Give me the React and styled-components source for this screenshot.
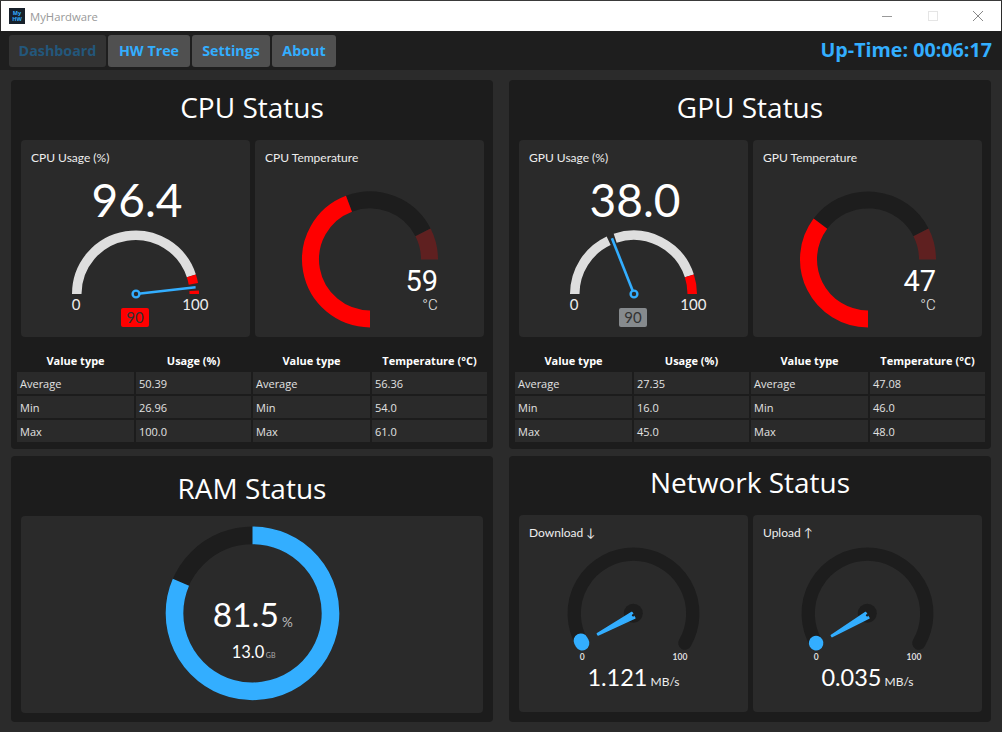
import { Fragment } from "react";
import styled, { createGlobalStyle } from "styled-components";

const ACCENT = "#33aeff";
const TRACK = "#1d1d1d";
const ARC = "#dedede";
const RED = "#ff0000";

const GlobalStyle = createGlobalStyle`
  html, body {
    margin: 0;
    padding: 0;
    background: #2b2b2b;
  }
  body {
    font-family: "Open Sans", "Liberation Sans", sans-serif;
  }
`;

const Window = styled.div`
  width: 1002px;
  height: 732px;
  overflow: hidden;
  display: flex;
  flex-direction: column;
  background: #2b2b2b;
  box-sizing: border-box;
  border-top: 1px solid #3a3a3a;
`;

const TitleBar = styled.div`
  height: 30px;
  flex: none;
  display: flex;
  align-items: center;
  background: #fff;
  padding-left: 8px;
  margin-left: 1px;
  margin-right: 1px;
  box-sizing: border-box;
`;

const AppIcon = styled.div`
  width: 16px;
  height: 16px;
  background: #17202a;
  color: ${ACCENT};
  font-size: 5.5px;
  font-weight: 700;
  line-height: 6px;
  text-align: center;
  padding-top: 2px;
  box-sizing: border-box;
`;

const AppName = styled.span`
  margin-left: 5px;
  font-size: 11.3px;
  color: #999;
`;

const WindowControls = styled.div`
  margin-left: auto;
  display: flex;
  align-items: center;
  gap: 35.5px;
  padding-right: 18px;
`;

const NavBar = styled.div`
  height: 39px;
  flex: none;
  display: flex;
  align-items: center;
  background: #1e1e1e;
  padding: 0 10px 0 9px;
  gap: 2px;
`;

const NavButton = styled.button`
  height: 32px;
  width: ${({ $w }) => $w}px;
  padding: 0;
  border: none;
  border-radius: 3px;
  background: ${({ $disabled }) => ($disabled ? "#333" : "#505050")};
  color: ${({ $disabled }) => ($disabled ? "#23577b" : ACCENT)};
  font-family: "Open Sans", sans-serif;
  font-weight: 700;
  font-size: 14.3px;
`;

const UpTime = styled.div`
  margin-left: auto;
  margin-top: -2px;
  color: ${ACCENT};
  font-size: 19.7px;
  font-weight: 700;
`;

const Dashboard = styled.div`
  display: grid;
  grid-template-columns: 482px 482px;
  grid-template-rows: 369px 266px;
  column-gap: 16px;
  row-gap: 7px;
  padding: 10px 11px;
`;

const Panel = styled.section`
  background: #1c1c1c;
  border-radius: 4px;
  display: flex;
  flex-direction: column;
  min-width: 0;
`;

const PanelTitle = styled.h2`
  margin: 0;
  height: ${({ $h }) => $h || 60}px;
  padding-top: ${({ $top }) => $top || 0}px;
  padding-bottom: ${({ $bottom }) => $bottom || 0}px;
  box-sizing: border-box;
  display: flex;
  align-items: center;
  justify-content: center;
  color: #fff;
  font-size: 28px;
  font-weight: 400;
`;

const CardRow = styled.div`
  display: flex;
  gap: 5px;
  padding: 0 10px;
`;

const Card = styled.div`
  flex: ${({ $wide }) => ($wide ? "1" : "0 0 229px")};
  height: 197px;
  background: #2a2a2a;
  border-radius: 4px;
  overflow: hidden;
`;

const CardTitle = styled.div`
  height: 27px;
  padding: 9px 0 0 10px;
  box-sizing: border-box;
  line-height: 18px;
  font-family: Lato, "Liberation Sans", sans-serif;
  font-size: 12px;
  color: #eee;
`;

const Chart = styled.svg`
  display: block;
  font-family: Lato, sans-serif;
`;

const Tables = styled.div`
  display: flex;
  gap: 2px;
  padding: 12px 6px 0;
`;

const ValueTable = styled.div`
  flex: 0 0 234px;
  display: grid;
  grid-template-columns: 117px 115px;
  column-gap: 2px;
  row-gap: 2px;
  font-size: 11px;
`;

const HeadCell = styled.div`
  height: 21px;
  line-height: 24px;
  text-align: center;
  color: #fff;
  font-weight: 700;
  white-space: nowrap;
`;

const Cell = styled.div`
  height: 22px;
  line-height: 24px;
  padding-left: 3px;
  background: #2a2a2a;
  color: #e2e2e2;
`;

const polar = (cx, cy, r, deg) => [
  cx + r * Math.cos((deg * Math.PI) / 180),
  cy - r * Math.sin((deg * Math.PI) / 180),
];

// arc drawn clockwise from angle a to angle b (degrees, 0 = east, ccw positive)
const arc = (cx, cy, r, a, b) => {
  const [x1, y1] = polar(cx, cy, r, a);
  const [x2, y2] = polar(cx, cy, r, b);
  const large = a - b > 180 ? 1 : 0;
  return `M${x1} ${y1}A${r} ${r} 0 ${large} 1 ${x2} ${y2}`;
};

const UsageGauge = ({ title, value, alert }) => {
  const cx = 114.5;
  const cy = 154;
  const r = 58.75;
  const ang = (p) => 180 - p * 1.8;
  const gapFrom = value - 1.9;
  const gapTo = value + 1.9;
  const segs = [
    [0, 90, ARC],
    [90, 100, RED],
  ];
  const pieces = [];
  segs.forEach(([from, to, color]) => {
    if (gapFrom > from) pieces.push([from, Math.min(to, gapFrom), color]);
    if (gapTo < to) pieces.push([Math.max(from, gapTo), to, color]);
  });
  const [tx, ty] = polar(115, cy, 60, ang(value));
  return (
    <Card>
      <CardTitle>{title}</CardTitle>
      <Chart width="229" height="170" viewBox="0 27 229 170">
        <text x="116" y="76.7" fill="#fff" fontSize="46" textAnchor="middle">
          {value.toFixed(1)}
        </text>
        {pieces.map(([from, to, color], i) => (
          <path key={i} d={arc(cx, cy, r, ang(from), ang(to))} fill="none" stroke={color} strokeWidth="9.5" />
        ))}
        <line x1="115" y1={cy} x2={tx} y2={ty} stroke={ACCENT} strokeWidth="2.6" />
        <circle cx="115" cy={cy} r="3.4" fill="#2a2a2a" stroke={ACCENT} strokeWidth="2.4" />
        <text x="55" y="170" fill="#eee" fontSize="15" textAnchor="middle">0</text>
        <text x="174.3" y="170" fill="#eee" fontSize="15" textAnchor="middle">100</text>
        <rect x="100" y="168" width="28" height="19" rx="2" fill={alert ? RED : "#868a8d"} />
        <text x="114" y="182.7" fill="#333" fontSize="15" textAnchor="middle">90</text>
      </Chart>
    </Card>
  );
};

const TempGauge = ({ title, value }) => {
  const cx = 115;
  const cy = 119.4;
  const r = 59.5;
  const ang = (p) => 270 - p * 2.7;
  return (
    <Card>
      <CardTitle>{title}</CardTitle>
      <Chart width="229" height="170" viewBox="0 27 229 170">
        <path d={arc(cx, cy, r, ang(value), ang(90))} fill="none" stroke={TRACK} strokeWidth="17" />
        <path d={arc(cx, cy, r, ang(90), ang(100))} fill="none" stroke="#5f2020" strokeWidth="17" />
        <path d={arc(cx, cy, r, ang(0), ang(value))} fill="none" stroke={RED} strokeWidth="17" />
        <text x="183" y="150.7" fill="#fff" fontFamily="Roboto" fontWeight="400" fontSize="29" textAnchor="end">{value}</text>
        <text x="182.7" y="170" fill="#e6e6e6" fontFamily="Roboto" fontWeight="300" fontSize="15" textAnchor="end">°C</text>
      </Chart>
    </Card>
  );
};

const SpeedGauge = ({ title, value, percent, tip }) => {
  const cx = 114.5;
  const cy = 98.5;
  const r = 59.3;
  const ang = (p) => 210 - p * 2.4;
  const hub = [114.3, 100.3];
  const dx = tip[0] - hub[0];
  const dy = tip[1] - hub[1];
  const len = Math.hypot(dx, dy);
  const nx = -dy / len;
  const ny = dx / len;
  const poly = [
    [hub[0] + nx * 3.2, hub[1] + ny * 3.2],
    [tip[0] + nx * 0.7, tip[1] + ny * 0.7],
    [tip[0] - nx * 0.7, tip[1] - ny * 0.7],
    [hub[0] - nx * 3.2, hub[1] - ny * 3.2],
  ]
    .map((p) => p.join(","))
    .join(" ");
  return (
    <Card>
      <CardTitle>{title}</CardTitle>
      <Chart width="229" height="170" viewBox="0 27 229 170">
        <path d={arc(cx, cy, r, ang(0), ang(100))} fill="none" stroke={TRACK} strokeWidth="13.3" strokeLinecap="round" />
        <path d={arc(cx, cy, r, ang(0), ang(percent))} fill="none" stroke={ACCENT} strokeWidth="14.5" strokeLinecap="round" />
        <circle cx="114.3" cy="98.3" r="9.5" fill={TRACK} />
        <polygon points={poly} fill={ACCENT} stroke={ACCENT} strokeWidth="1.6" strokeLinejoin="round" />
        <circle cx={hub[0]} cy={hub[1]} r="1.3" fill={TRACK} />
        <text x="63.3" y="145.3" fill="#ddd" fontSize="8.5" fontWeight="700" textAnchor="middle">0</text>
        <text x="161" y="145.3" fill="#ddd" fontSize="8.5" fontWeight="700" textAnchor="middle">100</text>
        <text x="114.5" y="170.7" fill="#fff" fontSize="23.5" textAnchor="middle">
          {value}
          <tspan dx="3" fontSize="12" fill="#eee">MB/s</tspan>
        </text>
      </Chart>
    </Card>
  );
};

const RamGauge = () => {
  const cx = 231.5;
  const cy = 97.3;
  const r = 78;
  return (
    <Card $wide>
      <Chart width="463" height="197" viewBox="0 0 463 197">
        <circle cx={cx} cy={cy} r={r} fill="none" stroke={TRACK} strokeWidth="17.7" />
        <path d={arc(cx, cy, r, 90, 90 - 81.5 * 3.6)} fill="none" stroke={ACCENT} strokeWidth="17.7" />
        <text x="191.7" y="110.7" fill="#fff" fontSize="33.5">
          81.5
          <tspan dx="3" fontSize="13.5" fill="#bbb">%</tspan>
        </text>
        <text x="210.7" y="142.3" fill="#fff" fontSize="16.5">
          13.0
          <tspan dx="1.5" fontSize="7" fill="#aaa">GB</tspan>
        </text>
      </Chart>
    </Card>
  );
};

const StatTable = ({ unit, rows }) => (
  <ValueTable>
    <HeadCell>Value type</HeadCell>
    <HeadCell>{unit}</HeadCell>
    {rows.map(([k, v]) => (
      <Fragment key={k}>
        <Cell>{k}</Cell>
        <Cell>{v}</Cell>
      </Fragment>
    ))}
  </ValueTable>
);

const App = () => (
  <Window>
    <GlobalStyle />
    <TitleBar>
      <AppIcon>My<br />HW</AppIcon>
      <AppName>MyHardware</AppName>
      <WindowControls>
        <svg width="10" height="10" viewBox="0 0 10 10"><path d="M0 5.5H10" stroke="#999" /></svg>
        <svg width="10" height="10" viewBox="0 0 10 10"><rect x=".5" y=".5" width="9" height="9" fill="none" stroke="#e5e5e5" /></svg>
        <svg width="10" height="10" viewBox="0 0 10 10"><path d="M0 0L10 10M10 0L0 10" stroke="#888" /></svg>
      </WindowControls>
    </TitleBar>
    <NavBar>
      <NavButton $w={97} $disabled>Dashboard</NavButton>
      <NavButton $w={82}>HW Tree</NavButton>
      <NavButton $w={78}>Settings</NavButton>
      <NavButton $w={64}>About</NavButton>
      <UpTime>Up-Time: 00:06:17</UpTime>
    </NavBar>
    <Dashboard>
      <Panel>
        <PanelTitle $bottom={6}>CPU Status</PanelTitle>
        <CardRow>
          <UsageGauge title="CPU Usage (%)" value={96.4} alert />
          <TempGauge title="CPU Temperature" value={59} />
        </CardRow>
        <Tables>
          <StatTable unit="Usage (%)" rows={[["Average", "50.39"], ["Min", "26.96"], ["Max", "100.0"]]} />
          <StatTable unit="Temperature (°C)" rows={[["Average", "56.36"], ["Min", "54.0"], ["Max", "61.0"]]} />
        </Tables>
      </Panel>
      <Panel>
        <PanelTitle $bottom={6}>GPU Status</PanelTitle>
        <CardRow>
          <UsageGauge title="GPU Usage (%)" value={38.0} />
          <TempGauge title="GPU Temperature" value={47} />
        </CardRow>
        <Tables>
          <StatTable unit="Usage (%)" rows={[["Average", "27.35"], ["Min", "16.0"], ["Max", "45.0"]]} />
          <StatTable unit="Temperature (°C)" rows={[["Average", "47.08"], ["Min", "46.0"], ["Max", "48.0"]]} />
        </Tables>
      </Panel>
      <Panel>
        <PanelTitle $top={3}>RAM Status</PanelTitle>
        <CardRow>
          <RamGauge />
        </CardRow>
      </Panel>
      <Panel>
        <PanelTitle $h={59} $bottom={8}>Network Status</PanelTitle>
        <CardRow>
          <SpeedGauge title="Download ↓" value="1.121" percent={1.1} tip={[78.7, 119.3]} />
          <SpeedGauge title="Upload ↑" value="0.035" percent={0.035} tip={[78.7, 121]} />
        </CardRow>
      </Panel>
    </Dashboard>
  </Window>
);

export default App;
